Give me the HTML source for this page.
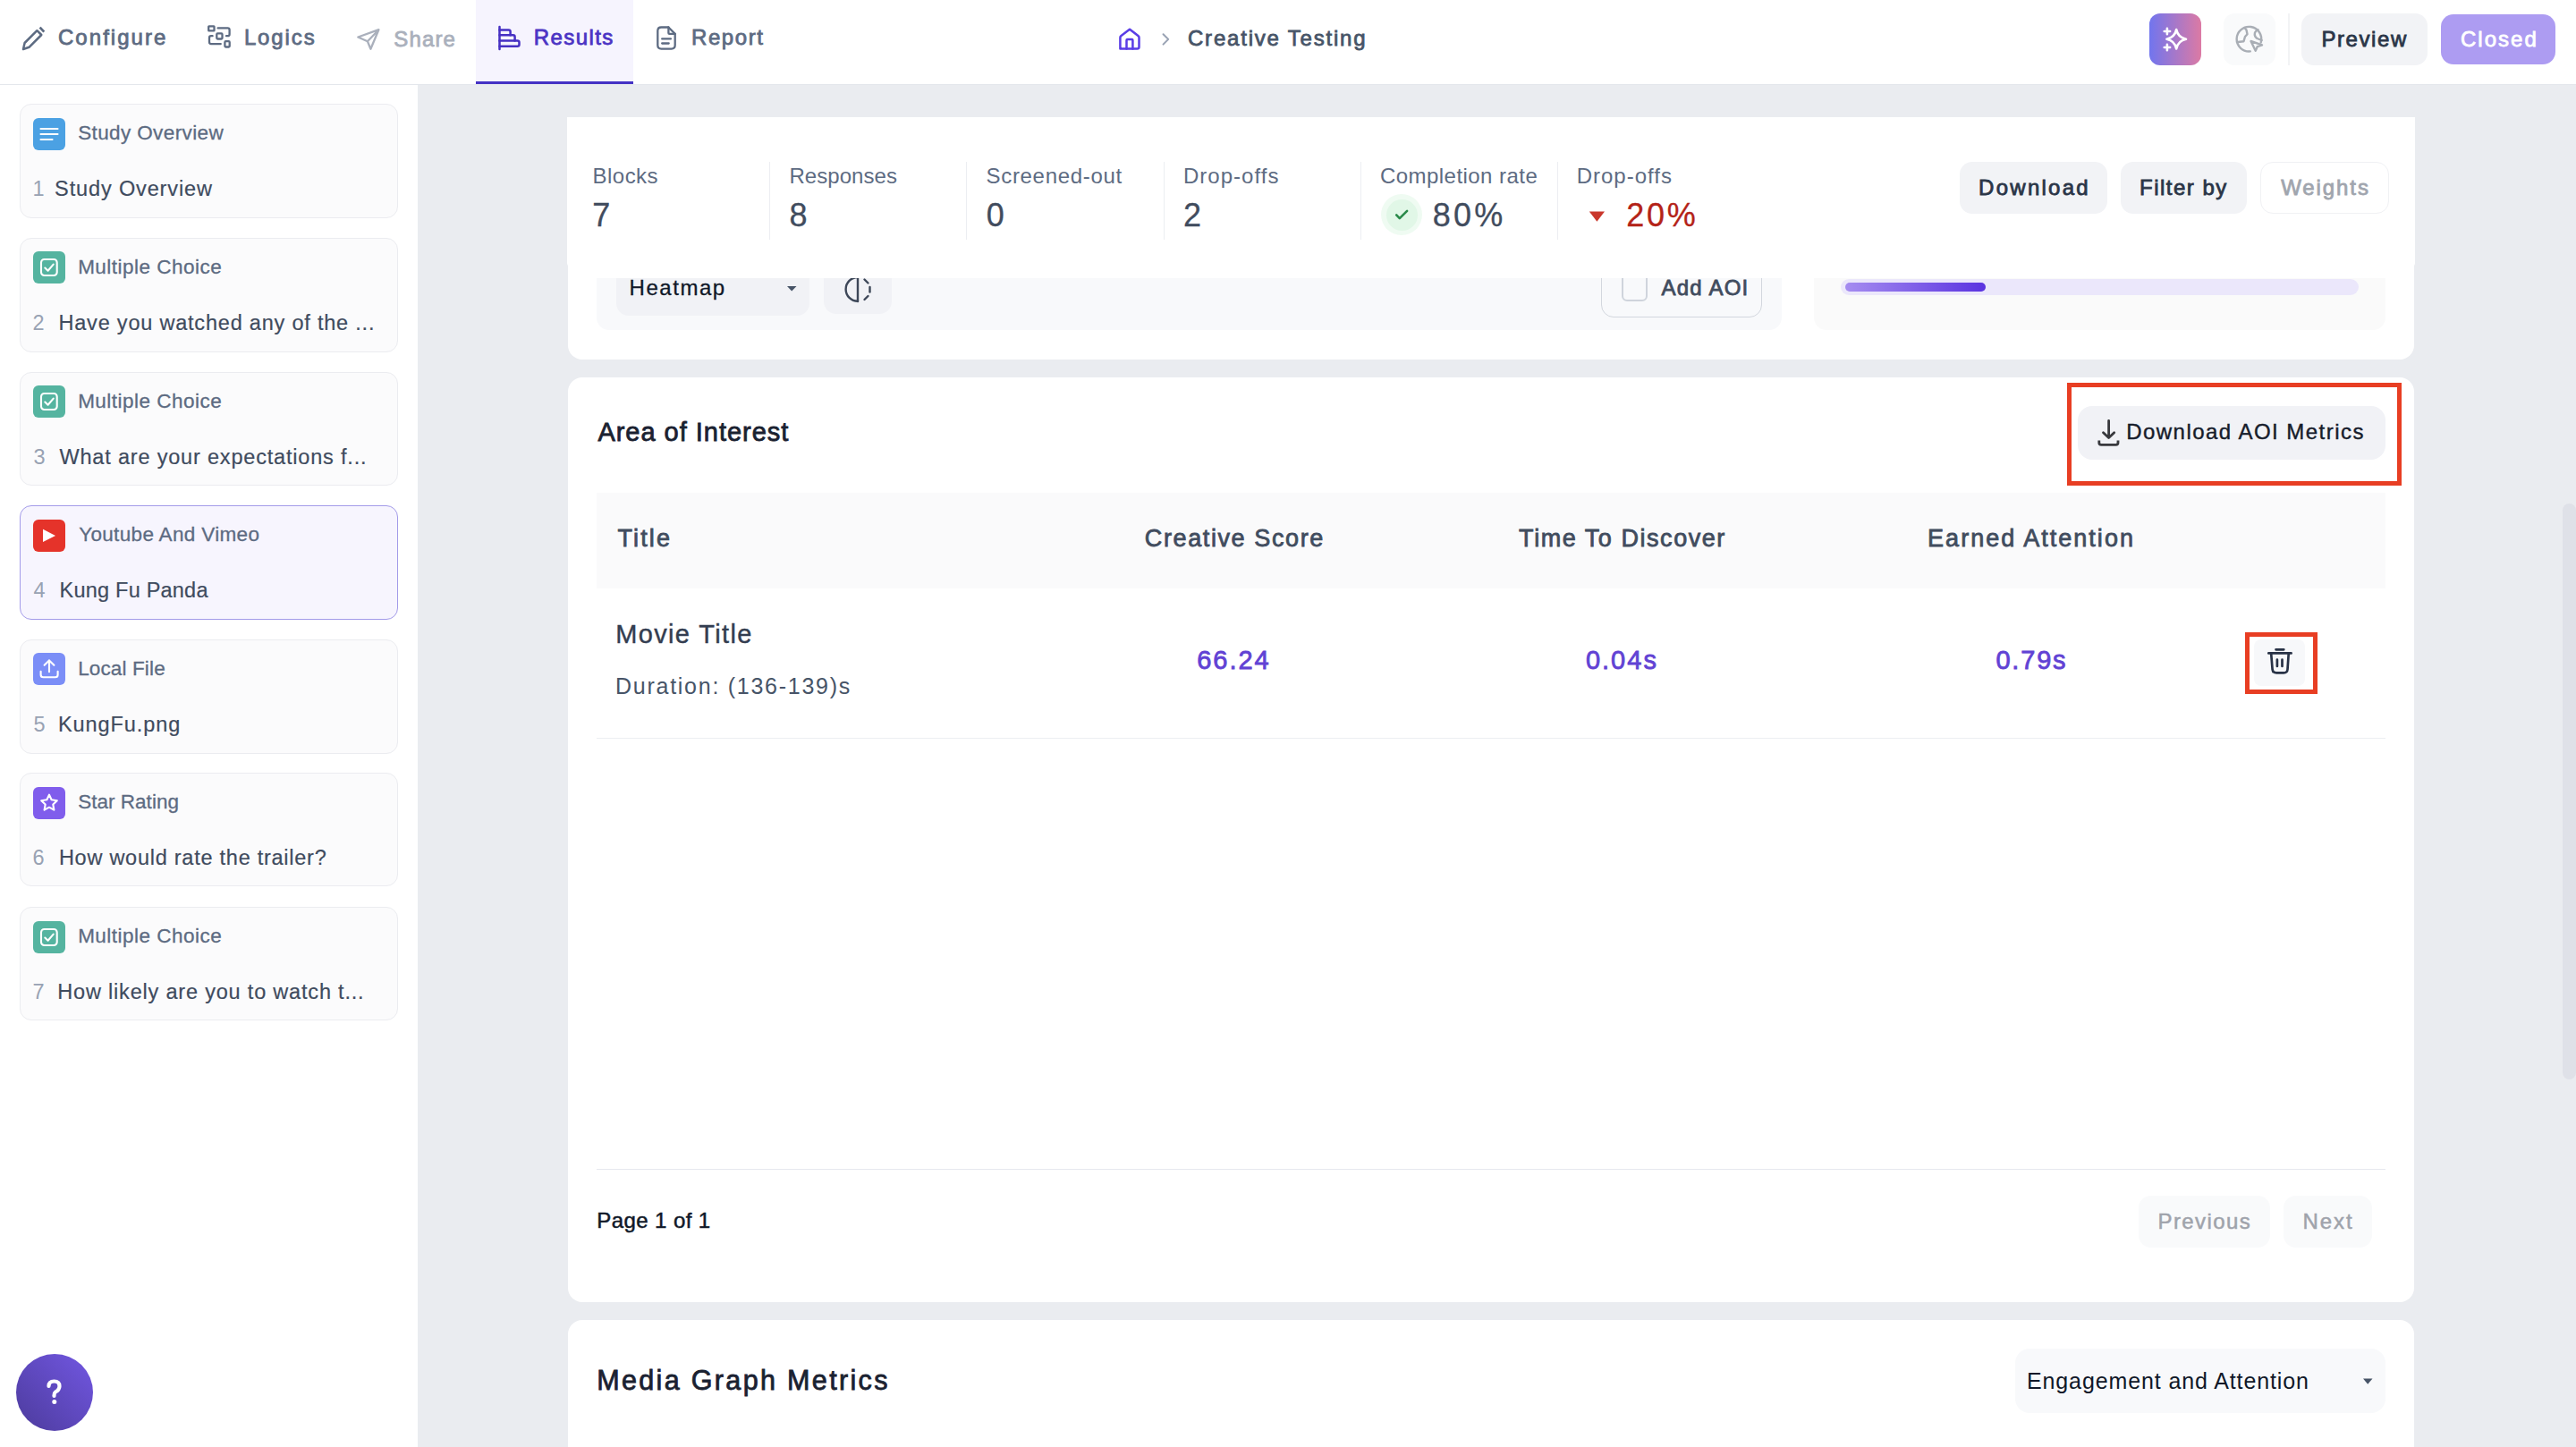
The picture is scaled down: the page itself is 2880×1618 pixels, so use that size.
<!DOCTYPE html>
<html><head><meta charset="utf-8">
<style>
html,body{margin:0;padding:0;width:2880px;height:1618px;overflow:hidden;background:#eaecf0;font-family:"Liberation Sans",sans-serif;}
.b{position:absolute;box-sizing:border-box;}
.t{position:absolute;white-space:nowrap;line-height:1;font-family:"Liberation Sans",sans-serif;}
svg{position:absolute;overflow:visible;}
</style></head><body>
<!-- header -->
<div class="b" style="left:0;top:0;width:2880px;height:94px;background:#fff;"></div>
<div class="b" style="left:0;top:94px;width:2880px;height:1px;background:#e4e7ec;"></div>
<div class="b" style="left:532px;top:0;width:176px;height:94px;background:#f6f4fe;"></div>
<div class="b" style="left:532px;top:91px;width:176px;height:3px;background:#4432c4;"></div>
<div class="b" style="left:2403px;top:15px;width:58px;height:58px;border-radius:12px;background:linear-gradient(90deg,#7175ee,#dc7aa4);"></div>
<div class="b" style="left:2486px;top:15px;width:58px;height:58px;border-radius:12px;background:#f9fafb;"></div>
<div class="b" style="left:2558px;top:15px;width:2px;height:58px;background:#f2f3f5;"></div>
<div class="b" style="left:2573px;top:15px;width:141px;height:58px;border-radius:14px;background:#f2f3f6;"></div>
<div class="b" style="left:2729px;top:16px;width:128px;height:56px;border-radius:14px;background:#ad9cf2;"></div>

<!-- sidebar -->
<div class="b" style="left:0;top:95px;width:467px;height:1523px;background:#fff;"></div>
<div class="b" style="left:22px;top:116px;width:423px;height:128px;border-radius:13px;background:#fbfbfc;border:1.5px solid #ebecf0;"></div>
<div class="b" style="left:22px;top:266px;width:423px;height:128px;border-radius:13px;background:#fbfbfc;border:1.5px solid #ebecf0;"></div>
<div class="b" style="left:22px;top:416px;width:423px;height:127px;border-radius:13px;background:#fbfbfc;border:1.5px solid #ebecf0;"></div>
<div class="b" style="left:22px;top:565px;width:423px;height:128px;border-radius:13px;background:#f7f5fe;border:1.5px solid #a39be9;"></div>
<div class="b" style="left:22px;top:715px;width:423px;height:128px;border-radius:13px;background:#fbfbfc;border:1.5px solid #ebecf0;"></div>
<div class="b" style="left:22px;top:864px;width:423px;height:127px;border-radius:13px;background:#fbfbfc;border:1.5px solid #ebecf0;"></div>
<div class="b" style="left:22px;top:1014px;width:423px;height:127px;border-radius:13px;background:#fbfbfc;border:1.5px solid #ebecf0;"></div>
<!-- sidebar icon boxes -->
<div class="b" style="left:37px;top:132px;width:36px;height:36px;border-radius:6px;background:#4ba1e3;"></div>
<div class="b" style="left:37px;top:281px;width:36px;height:36px;border-radius:6px;background:#55b4a0;"></div>
<div class="b" style="left:37px;top:431px;width:36px;height:36px;border-radius:6px;background:#55b4a0;"></div>
<div class="b" style="left:37px;top:581px;width:36px;height:36px;border-radius:6px;background:#e5332a;"></div>
<div class="b" style="left:37px;top:730px;width:36px;height:36px;border-radius:6px;background:#7b8ef7;"></div>
<div class="b" style="left:37px;top:880px;width:36px;height:36px;border-radius:6px;background:#805dec;"></div>
<div class="b" style="left:37px;top:1030px;width:36px;height:36px;border-radius:6px;background:#55b4a0;"></div>
<!-- help -->
<div class="b" style="left:18px;top:1514px;width:86px;height:86px;border-radius:50%;background:linear-gradient(225deg,#7257e2,#4c3b9c);"></div>

<!-- heatmap card (mostly hidden) -->
<div class="b" style="left:635px;top:131px;width:2064px;height:271px;border-radius:0 0 16px 16px;background:#fff;"></div>
<div class="b" style="left:667px;top:260px;width:1325px;height:109px;border-radius:14px;background:#f8f9fb;"></div>
<div class="b" style="left:689px;top:260px;width:216px;height:93px;border-radius:14px;background:#f1f2f6;"></div>
<div class="b" style="left:921px;top:260px;width:76px;height:91px;border-radius:14px;background:#f1f2f6;"></div>
<div class="b" style="left:1790px;top:260px;width:180px;height:95px;border-radius:14px;border:1.5px solid #d3d7de;"></div>
<div class="b" style="left:1813px;top:300px;width:29px;height:37px;border-radius:6px;border:2px solid #cfd4dc;"></div>
<div class="b" style="left:2028px;top:260px;width:639px;height:109px;border-radius:14px;background:#fafafa;"></div>
<div class="b" style="left:2058px;top:312px;width:579px;height:18px;border-radius:9px;background:#ebe7fb;"></div>
<div class="b" style="left:2063px;top:316px;width:157px;height:10px;border-radius:5px;background:linear-gradient(90deg,#a58cf0,#5a33e0);"></div>
<svg style="left:0;top:0" width="2880" height="1618" viewBox="0 0 2880 1618">
  <path d="M880 320 L890.5 320 L885.2 325.5 Z" fill="#475467"/>
  <g fill="none" stroke="#3d4758" stroke-width="2.4" stroke-linecap="round">
    <path d="M959 310 A13.4 13.4 0 0 0 959 336.8"/>
    <path d="M959 311 L959 337"/>
    <path d="M966.5 312.5 L970.5 316.5"/>
    <path d="M972.5 321 L972.5 326.5"/>
    <path d="M970.5 331 L966.5 335"/>
  </g>
</svg>
<div class="t" style="left:703.55px;top:310.13px;font-size:24px;color:#101828;letter-spacing:1.544px;-webkit-text-stroke:0.3px #101828;">Heatmap</div>
<div class="t" style="left:1857.40px;top:310.08px;font-size:24px;color:#414c5e;letter-spacing:1.242px;-webkit-text-stroke:0.8px #414c5e;">Add AOI</div>
<div class="b" style="left:635px;top:290px;width:2064px;height:21px;background:#fff;"></div>

<!-- stats card -->
<div class="b" style="left:634px;top:131px;width:2066px;height:169px;border-radius:0 0 6px 6px;background:#fff;"></div>
<div class="b" style="left:860px;top:181px;width:1px;height:87px;background:#eceef2;"></div>
<div class="b" style="left:1080px;top:181px;width:1px;height:87px;background:#eceef2;"></div>
<div class="b" style="left:1301px;top:181px;width:1px;height:87px;background:#eceef2;"></div>
<div class="b" style="left:1521px;top:181px;width:1px;height:87px;background:#eceef2;"></div>
<div class="b" style="left:1741px;top:181px;width:1px;height:87px;background:#eceef2;"></div>
<div class="b" style="left:1544px;top:217px;width:46px;height:46px;border-radius:50%;background:#effbf2;"></div>
<div class="b" style="left:1549.5px;top:222.5px;width:35px;height:35px;border-radius:50%;background:#e1f7e7;"></div>
<div class="b" style="left:2191px;top:181px;width:165px;height:58px;border-radius:14px;background:#f2f3f6;"></div>
<div class="b" style="left:2371px;top:181px;width:141px;height:58px;border-radius:14px;background:#f2f3f6;"></div>
<div class="b" style="left:2527px;top:181px;width:144px;height:58px;border-radius:14px;background:#fff;border:1.5px solid #f0f1f4;"></div>

<!-- AOI card -->
<div class="b" style="left:635px;top:422px;width:2064px;height:1034px;border-radius:16px;background:#fff;"></div>
<div class="b" style="left:2323px;top:454px;width:344px;height:60px;border-radius:16px;background:#f1f2f6;"></div>
<div class="b" style="left:2311px;top:428px;width:374px;height:115px;border:5px solid #e83e23;"></div>
<div class="b" style="left:667px;top:551px;width:2000px;height:107px;background:#fafafb;"></div>
<div class="b" style="left:667px;top:825px;width:2000px;height:1px;background:#eceef2;"></div>
<div class="b" style="left:2520px;top:715px;width:57px;height:52px;border-radius:8px;background:#f7f8fa;"></div>
<div class="b" style="left:2510px;top:707px;width:81px;height:69px;border:5px solid #e83e23;"></div>
<div class="b" style="left:667px;top:1307px;width:2000px;height:1px;background:#e6e8ee;"></div>
<div class="b" style="left:2391px;top:1337px;width:147px;height:58px;border-radius:14px;background:#f9fafb;"></div>
<div class="b" style="left:2553px;top:1337px;width:99px;height:58px;border-radius:14px;background:#f9fafb;"></div>

<!-- media card -->
<div class="b" style="left:635px;top:1476px;width:2064px;height:200px;border-radius:16px;background:#fff;"></div>
<div class="b" style="left:2253px;top:1508px;width:414px;height:72px;border-radius:16px;background:#f8f9fb;"></div>

<!-- scrollbar -->
<div class="b" style="left:2865px;top:563px;width:15px;height:644px;border-radius:8px;background:#dfe1e8;"></div>

<div class="t" style="left:65.00px;top:29.98px;font-size:24px;color:#5d6b82;letter-spacing:2.036px;-webkit-text-stroke:0.8px #5d6b82;">Configure</div>
<div class="t" style="left:272.90px;top:29.98px;font-size:24px;color:#5d6b82;letter-spacing:1.885px;-webkit-text-stroke:0.8px #5d6b82;">Logics</div>
<div class="t" style="left:440.30px;top:32.08px;font-size:24px;color:#aab0bc;letter-spacing:1.151px;-webkit-text-stroke:0.8px #aab0bc;">Share</div>
<div class="t" style="left:596.80px;top:29.98px;font-size:24px;color:#4b33c4;letter-spacing:1.412px;-webkit-text-stroke:0.8px #4b33c4;">Results</div>
<div class="t" style="left:773.00px;top:30.48px;font-size:24px;color:#5d6b82;letter-spacing:1.567px;-webkit-text-stroke:0.8px #5d6b82;">Report</div>
<div class="t" style="left:1328.00px;top:31.18px;font-size:24px;color:#475467;letter-spacing:1.791px;-webkit-text-stroke:0.8px #475467;">Creative Testing</div>
<div class="t" style="left:2595.40px;top:32.08px;font-size:24px;color:#2a3547;letter-spacing:1.595px;-webkit-text-stroke:0.8px #2a3547;">Preview</div>
<div class="t" style="left:2751.00px;top:32.08px;font-size:24px;color:#ffffff;letter-spacing:2.008px;-webkit-text-stroke:0.8px #ffffff;">Closed</div>
<div class="t" style="left:87.15px;top:138.00px;font-size:22.5px;color:#5d6b82;letter-spacing:0.384px;-webkit-text-stroke:0.3px #5d6b82;">Study Overview</div>
<div class="t" style="left:36.50px;top:200.11px;font-size:23.5px;color:#98a2b3;letter-spacing:0.000px;">1</div>
<div class="t" style="left:61.10px;top:200.01px;font-size:23.5px;color:#3f4b5e;letter-spacing:0.863px;-webkit-text-stroke:0.2px #3f4b5e;">Study Overview</div>
<div class="t" style="left:87.15px;top:288.00px;font-size:22.5px;color:#5d6b82;letter-spacing:0.478px;-webkit-text-stroke:0.3px #5d6b82;">Multiple Choice</div>
<div class="t" style="left:36.50px;top:350.11px;font-size:23.5px;color:#98a2b3;letter-spacing:0.000px;">2</div>
<div class="t" style="left:65.50px;top:350.01px;font-size:23.5px;color:#3f4b5e;letter-spacing:0.791px;-webkit-text-stroke:0.2px #3f4b5e;">Have you watched any of the ...</div>
<div class="t" style="left:87.15px;top:438.00px;font-size:22.5px;color:#5d6b82;letter-spacing:0.478px;-webkit-text-stroke:0.3px #5d6b82;">Multiple Choice</div>
<div class="t" style="left:37.50px;top:500.11px;font-size:23.5px;color:#98a2b3;letter-spacing:0.000px;">3</div>
<div class="t" style="left:66.50px;top:500.01px;font-size:23.5px;color:#3f4b5e;letter-spacing:0.811px;-webkit-text-stroke:0.2px #3f4b5e;">What are your expectations f...</div>
<div class="t" style="left:88.15px;top:587.00px;font-size:22.5px;color:#5d6b82;letter-spacing:0.334px;-webkit-text-stroke:0.3px #5d6b82;">Youtube And Vimeo</div>
<div class="t" style="left:37.50px;top:649.11px;font-size:23.5px;color:#98a2b3;letter-spacing:0.000px;">4</div>
<div class="t" style="left:66.60px;top:649.01px;font-size:23.5px;color:#3f4b5e;letter-spacing:0.213px;-webkit-text-stroke:0.2px #3f4b5e;">Kung Fu Panda</div>
<div class="t" style="left:87.15px;top:737.00px;font-size:22.5px;color:#5d6b82;letter-spacing:0.135px;-webkit-text-stroke:0.3px #5d6b82;">Local File</div>
<div class="t" style="left:37.50px;top:799.11px;font-size:23.5px;color:#98a2b3;letter-spacing:0.000px;">5</div>
<div class="t" style="left:64.90px;top:799.01px;font-size:23.5px;color:#3f4b5e;letter-spacing:0.925px;-webkit-text-stroke:0.2px #3f4b5e;">KungFu.png</div>
<div class="t" style="left:87.15px;top:886.00px;font-size:22.5px;color:#5d6b82;letter-spacing:0.026px;-webkit-text-stroke:0.3px #5d6b82;">Star Rating</div>
<div class="t" style="left:36.50px;top:948.11px;font-size:23.5px;color:#98a2b3;letter-spacing:0.000px;">6</div>
<div class="t" style="left:65.90px;top:948.01px;font-size:23.5px;color:#3f4b5e;letter-spacing:0.744px;-webkit-text-stroke:0.2px #3f4b5e;">How would rate the trailer?</div>
<div class="t" style="left:87.15px;top:1036.00px;font-size:22.5px;color:#5d6b82;letter-spacing:0.478px;-webkit-text-stroke:0.3px #5d6b82;">Multiple Choice</div>
<div class="t" style="left:36.50px;top:1098.11px;font-size:23.5px;color:#98a2b3;letter-spacing:0.000px;">7</div>
<div class="t" style="left:64.30px;top:1098.01px;font-size:23.5px;color:#3f4b5e;letter-spacing:0.805px;-webkit-text-stroke:0.2px #3f4b5e;">How likely are you to watch t...</div>
<div class="t" style="left:662.50px;top:184.58px;font-size:24px;color:#5d6b82;letter-spacing:0.482px;">Blocks</div>
<div class="t" style="left:882.40px;top:184.58px;font-size:24px;color:#5d6b82;letter-spacing:0.066px;">Responses</div>
<div class="t" style="left:1102.50px;top:184.58px;font-size:24px;color:#5d6b82;letter-spacing:0.689px;">Screened-out</div>
<div class="t" style="left:1322.90px;top:184.58px;font-size:24px;color:#5d6b82;letter-spacing:1.042px;">Drop-offs</div>
<div class="t" style="left:1543.00px;top:184.58px;font-size:24px;color:#5d6b82;letter-spacing:0.452px;">Completion rate</div>
<div class="t" style="left:1762.70px;top:184.58px;font-size:24px;color:#5d6b82;letter-spacing:1.005px;">Drop-offs</div>
<div class="t" style="left:662.15px;top:223.18px;font-size:36px;color:#414c5e;letter-spacing:0.000px;-webkit-text-stroke:0.3px #414c5e;">7</div>
<div class="t" style="left:882.55px;top:223.18px;font-size:36px;color:#414c5e;letter-spacing:0.000px;-webkit-text-stroke:0.3px #414c5e;">8</div>
<div class="t" style="left:1102.65px;top:223.18px;font-size:36px;color:#414c5e;letter-spacing:0.000px;-webkit-text-stroke:0.3px #414c5e;">0</div>
<div class="t" style="left:1323.05px;top:223.18px;font-size:36px;color:#414c5e;letter-spacing:0.000px;-webkit-text-stroke:0.3px #414c5e;">2</div>
<div class="t" style="left:1601.75px;top:223.18px;font-size:36px;color:#414c5e;letter-spacing:3.179px;-webkit-text-stroke:0.3px #414c5e;">80%</div>
<div class="t" style="left:1818.15px;top:223.18px;font-size:36px;color:#b42318;letter-spacing:2.829px;-webkit-text-stroke:0.3px #b42318;">20%</div>
<div class="t" style="left:2212.10px;top:197.78px;font-size:24px;color:#2a3547;letter-spacing:2.259px;-webkit-text-stroke:0.8px #2a3547;">Download</div>
<div class="t" style="left:2392.10px;top:197.78px;font-size:24px;color:#2a3547;letter-spacing:1.482px;-webkit-text-stroke:0.8px #2a3547;">Filter by</div>
<div class="t" style="left:2550.20px;top:197.78px;font-size:24px;color:#a0a5ae;letter-spacing:1.906px;-webkit-text-stroke:0.8px #a0a5ae;">Weights</div>
<div class="t" style="left:668.40px;top:468.90px;font-size:29px;color:#1a2130;letter-spacing:0.979px;-webkit-text-stroke:0.8px #1a2130;">Area of Interest</div>
<div class="t" style="left:2377.20px;top:471.18px;font-size:24px;color:#161c2b;letter-spacing:1.466px;-webkit-text-stroke:0.4px #161c2b;">Download AOI Metrics</div>
<div class="t" style="left:690.40px;top:588.64px;font-size:27px;color:#414c5e;letter-spacing:2.153px;-webkit-text-stroke:0.8px #414c5e;">Title</div>
<div class="t" style="left:1279.80px;top:588.64px;font-size:27px;color:#414c5e;letter-spacing:1.611px;-webkit-text-stroke:0.8px #414c5e;">Creative Score</div>
<div class="t" style="left:1698.10px;top:588.64px;font-size:27px;color:#414c5e;letter-spacing:1.544px;-webkit-text-stroke:0.8px #414c5e;">Time To Discover</div>
<div class="t" style="left:2155.10px;top:588.64px;font-size:27px;color:#414c5e;letter-spacing:2.012px;-webkit-text-stroke:0.8px #414c5e;">Earned Attention</div>
<div class="t" style="left:688.20px;top:695.15px;font-size:29px;color:#333d50;letter-spacing:1.360px;-webkit-text-stroke:0.4px #333d50;">Movie Title</div>
<div class="t" style="left:688.00px;top:754.64px;font-size:25px;color:#475467;letter-spacing:1.738px;">Duration: (136-139)s</div>
<div class="t" style="left:1338.20px;top:723.85px;font-size:29px;color:#6142d4;letter-spacing:1.989px;-webkit-text-stroke:0.8px #6142d4;">66.24</div>
<div class="t" style="left:1772.90px;top:723.85px;font-size:29px;color:#6142d4;letter-spacing:2.014px;-webkit-text-stroke:0.8px #6142d4;">0.04s</div>
<div class="t" style="left:2231.40px;top:723.85px;font-size:29px;color:#6142d4;letter-spacing:1.814px;-webkit-text-stroke:0.8px #6142d4;">0.79s</div>
<div class="t" style="left:667.25px;top:1353.33px;font-size:24px;color:#101828;letter-spacing:0.418px;-webkit-text-stroke:0.5px #101828;">Page 1 of 1</div>
<div class="t" style="left:2412.55px;top:1354.23px;font-size:24px;color:#9fa3ab;letter-spacing:1.404px;-webkit-text-stroke:0.5px #9fa3ab;">Previous</div>
<div class="t" style="left:2574.55px;top:1354.23px;font-size:24px;color:#9fa3ab;letter-spacing:1.940px;-webkit-text-stroke:0.5px #9fa3ab;">Next</div>
<div class="t" style="left:667.20px;top:1528.48px;font-size:30.5px;color:#1a2130;letter-spacing:2.344px;-webkit-text-stroke:0.8px #1a2130;">Media Graph Metrics</div>
<div class="t" style="left:2266.00px;top:1531.64px;font-size:25px;color:#101828;letter-spacing:0.880px;">Engagement and Attention</div>

<!-- icons -->
<svg style="left:0;top:0" width="2880" height="1618" viewBox="0 0 2880 1618">
  <g fill="none" stroke-linecap="round" stroke-linejoin="round">
    <!-- pencil -->
    <g stroke="#5d6b82" stroke-width="2.5">
      <path d="M26 55 L27.6 48 L41.4 34.2 L46.3 39 L32.5 52.8 Z"/>
      <path d="M44.6 30.6 L49.3 35.6" stroke-linecap="butt" stroke-width="2.8"/>
    </g>
    <!-- logics -->
    <g stroke="#5d6b82" stroke-width="2.3">
      <rect x="233.2" y="29.3" width="6.3" height="5.1" rx="0.5"/>
      <path d="M243.6 31.4 H254.6 Q256.6 31.4 256.6 33.4 V38.2 Q256.6 40.2 254.6 40.2 H253"/>
      <rect x="242.3" y="37.4" width="6.2" height="6.1" rx="1"/>
      <path d="M237.6 40.2 H236 Q234 40.2 234 42.2 V47.1 Q234 49.1 236 49.1 H246.8"/>
      <rect x="251.4" y="46.2" width="5.3" height="6.3" rx="1"/>
    </g>
    <!-- share -->
    <path d="M400.3 41.5 L423.4 33.2 L414.4 54.7 L410.9 46.2 Z M410.9 46.2 L423.4 33.2" stroke="#aab0bc" stroke-width="2.3"/>
    <!-- results -->
    <g stroke="#4630c3" stroke-width="2.5">
      <path d="M558.5 30 V55"/>
      <path d="M558.5 33.5 H568.6 Q570.6 33.5 570.6 35.5 V39.3 H558.5"/>
      <path d="M570.6 39.3 H573.6 Q575.6 39.3 575.6 41.3 V45.4 H558.5"/>
      <path d="M575.6 45.4 H578.5 Q580.5 45.4 580.5 47.4 V49.7 Q580.5 51.7 578.5 51.7 H558.5"/>
    </g>
    <!-- report -->
    <g stroke="#5d6b82" stroke-width="2.3">
      <path d="M747.4 30.5 H739.3 Q735.3 30.5 735.3 34.5 V50.6 Q735.3 54.6 739.3 54.6 H750.7 Q754.7 54.6 754.7 50.6 V37.9 Z"/>
      <path d="M747.4 30.5 V36.9 Q747.4 37.9 748.4 37.9 H754.7"/>
      <path d="M740.2 43.4 H749.9 M740.2 48.5 H747.7"/>
    </g>
    <!-- home -->
    <g stroke="#5a3de6" stroke-width="2.5">
      <path d="M1252.4 54.4 V42 Q1252.4 40.7 1253.5 39.9 L1263 32.8 L1272.4 39.9 Q1273.5 40.7 1273.5 42 V52.4 Q1273.5 54.4 1271.5 54.4 H1254.4 Q1252.4 54.4 1252.4 52.4"/>
      <path d="M1259.5 54.4 V45.1 Q1259.5 44.1 1260.5 44.1 H1265.4 Q1266.4 44.1 1266.4 45.1 V54.4"/>
    </g>
    <path d="M1300.5 38.2 L1306.2 43.9 L1300.5 49.6" stroke="#98a2b3" stroke-width="2"/>
    <!-- sparkle -->
    <g stroke="#fff" stroke-width="2.6">
      <path d="M2433.2 33 Q2435 41.9 2444 43.7 Q2435 45.5 2433.2 54.5 Q2431.4 45.5 2422.4 43.7 Q2431.4 41.9 2433.2 33 Z"/>
      <path d="M2422.9 31.8 V38.2 M2419.7 35 H2426.1"/>
      <path d="M2422.9 49.8 V56.2 M2419.7 53 H2426.1"/>
    </g>
    <!-- globe -->
    <g stroke="#a9aeb5" stroke-width="2.4">
      <path d="M2527.7 47.5 A13.8 13.8 0 1 0 2515.8 57.4"/>
      <path d="M2502 47 L2508.5 46.2 L2510 41 L2512.5 38.2 L2511.5 33.6 L2509.6 31.3"/>
      <path d="M2528.6 45 L2523.5 43 Q2520 40.5 2521 36.5 Q2522.5 33.5 2524.5 33.2"/>
      <path d="M2516.5 46 L2529 50.3 L2523.7 52.2 L2521.7 56.8 Z"/>
    </g>
    <!-- sidebar icons -->
    <g stroke="#fff" stroke-width="2.1">
      <path d="M45.5 144 H64.5 M45.5 150 H64.5 M45.5 156 H58.5"/>
    </g>
    <g stroke="#fff" stroke-width="2.1">
      <rect x="46" y="290" width="17.7" height="18" rx="3.5"/>
      <path d="M50.3 299.5 L53.6 302.7 L59.7 295.6"/>
      <rect x="46" y="440" width="17.7" height="18" rx="3.5"/>
      <path d="M50.3 449.5 L53.6 452.7 L59.7 445.6"/>
      <rect x="46" y="1039" width="17.7" height="18" rx="3.5"/>
      <path d="M50.3 1048.5 L53.6 1051.7 L59.7 1044.6"/>
    </g>
    <path d="M48 591.8 L48 606 L62 598.9 Z" fill="#fff" stroke="none"/>
    <g stroke="#fff" stroke-width="2.1">
      <path d="M55 751.2 V738.4 M49.6 743.8 L55 738.4 L60.4 743.8"/>
      <path d="M45.6 750.8 V754.5 Q45.6 757.3 48.4 757.3 H61.8 Q64.6 757.3 64.6 754.5 V750.8"/>
    </g>
    <path d="M55 888.6 L57.6 894.3 L63.8 895.2 L59.3 899.5 L60.4 905.7 L55 902.7 L49.6 905.7 L50.7 899.5 L46.2 895.2 L52.4 894.3 Z" stroke="#fff" stroke-width="2.1"/>
    <!-- help ? -->
    <g stroke="#fff" stroke-width="4.2">
      <path d="M54.5 1550 Q54.5 1544.5 60.5 1544.5 Q66.5 1544.5 66.5 1550 Q66.5 1554 62 1556.5 Q60.5 1557.5 60.5 1560.5 V1561"/>
    </g>
    <circle cx="60.8" cy="1567.5" r="2.5" fill="#fff" stroke="none"/>
    <!-- check in circle -->
    <path d="M1561.2 240.4 L1564.8 244.1 L1573.1 235.8" stroke="#2a8a4a" stroke-width="2.6"/>
    <!-- red triangle -->
    <path d="M1776.8 236.4 H1794 L1785.4 247.8 Z" fill="#c9372c" stroke="none"/>
    <!-- download icon -->
    <g stroke="#38393d" stroke-width="2.8">
      <path d="M2357.6 470.5 V489 M2351.5 483.7 L2357.6 489.6 L2363.7 483.7"/>
      <path d="M2346.8 492.4 V495 Q2346.8 497.4 2349.2 497.4 H2365.6 Q2368 497.4 2368 495 V492.4" stroke-linecap="butt"/>
    </g>
    <!-- trash -->
    <g stroke="#283246" stroke-width="2.7">
      <path d="M2536.3 730.4 H2561.6 M2544.5 726.3 H2553.3"/>
      <path d="M2539.2 731 L2540.6 748.5 Q2541 752.4 2545 752.4 H2553.2 Q2557.2 752.4 2557.5 748.5 L2558.7 731"/>
      <path d="M2545.9 737.7 V745 M2551.5 737.7 V745"/>
    </g>
    <!-- select caret -->
    <path d="M2642 1541.5 H2652.5 L2647.2 1547.7 Z" fill="#475467" stroke="none"/>
  </g>
</svg>
<script>(function(){var w=window.innerWidth;if(w&&Math.abs(w-2880)>4){document.documentElement.style.zoom=(w/2880);}})();</script>
</body></html>
